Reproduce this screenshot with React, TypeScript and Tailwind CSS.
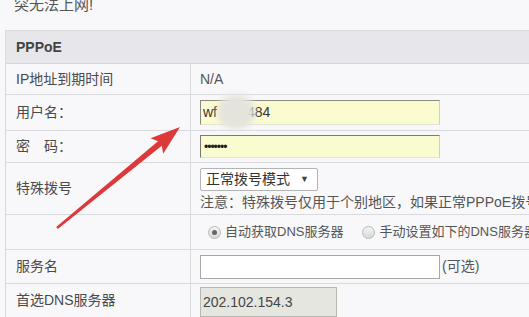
import React from "react";

const font = { fontFamily: '"Liberation Sans", "Noto Sans CJK SC", sans-serif' };

function Row({ label, h, children }: { label?: string; h: string; children?: React.ReactNode }) {
    return (
        <div className={`flex border-b border-[#d9d9de] ${h}`}>
            <div className="w-[185px] shrink-0 border-r border-[#d9d9de] pl-[10px] flex items-center text-[14px] text-[#4a4a4a]">
                {label}
            </div>
            <div className="flex-1 pl-[9px] flex flex-col justify-center">{children}</div>
        </div>
    );
}

function Radio({ checked }: { checked?: boolean }) {
    return (
        <span className="w-[13px] h-[13px] rounded-full border border-[#b8b8b8] bg-gradient-to-b from-[#f4f4f4] to-[#d8d8d8] flex items-center justify-center shrink-0">
            {checked && <span className="w-[5px] h-[5px] rounded-full bg-[#666]" />}
        </span>
    );
}

export default function App() {
    return (
        <div className="relative w-[529px] h-[317px] overflow-hidden bg-[#f8f8fa] text-[#444]" style={font}>
            <div className="h-[34px] pl-[14px]">
                <div className="-mt-[4px] text-[15px] leading-[18px] text-[#555]">突无法上网!</div>
            </div>

            <div className="ml-[5px] border-l border-t border-[#d9d9de] whitespace-nowrap">
                <div className="h-[33px] bg-[#e7e7eb] border-b border-[#d6d6db] pl-[10px] flex items-center text-[14px] font-bold text-[#444]">
                    PPPoE
                </div>

                <Row label="IP地址到期时间" h="h-[31px]">
                    <span className="text-[14px] text-[#555]">N/A</span>
                </Row>

                <Row label="用户名：" h="h-[36px]">
                    <div className="relative w-[240px] h-[25px] bg-[#fbfbd0] border border-t-[#8a8a80] border-l-[#8a8a80] border-r-[#cfcfc4] border-b-[#e4e4d4] flex items-center pl-[2px] text-[14px] text-[#333]">
                        <span>wf</span>
                        <span className="ml-[30px]">484</span>
                        <div className="absolute left-[16px] -top-[6px] w-[38px] h-[34px] rounded-full bg-[#e4e4dc] blur-[3px]" />
                    </div>
                </Row>

                <Row label="密　码：" h="h-[32px]">
                    <div className="w-[240px] h-[23px] bg-[#fbfbd0] border border-t-[#7a7a70] border-l-[#7a7a70] border-r-[#cfcfc4] border-b-[#e4e4d4] flex items-center pl-[3px] text-[12px] tracking-[-1px] text-[#222] leading-none">
                        •••••••
                    </div>
                </Row>

                <Row label="特殊拨号" h="h-[52px]">
                    <div className="w-[118px] h-[23px] mt-[1px] bg-white border border-[#b4b4b4] rounded-[2px] flex items-center pl-[5px] text-[14px] text-[#333]">
                        正常拨号模式
                        <span className="ml-[10px] text-[9px] text-[#444]">▼</span>
                    </div>
                    <div className="mt-[3px] text-[14px] leading-[16px] text-[#555]">
                        注意：特殊拨号仅用于个别地区，如果正常PPPoE拨号无法上网
                    </div>
                </Row>

                <Row h="h-[35px]">
                    <div className="flex items-center pl-[8px] text-[13px] text-[#555]">
                        <Radio checked />
                        <span className="ml-[4px]">自动获取DNS服务器</span>
                        <span className="ml-[19px]">
                            <Radio />
                        </span>
                        <span className="ml-[4px]">手动设置如下的DNS服务器</span>
                    </div>
                </Row>

                <Row label="服务名" h="h-[34px]">
                    <div className="flex items-center">
                        <div className="w-[240px] h-[24px] bg-white border border-[#a8a8a8]" />
                        <span className="ml-[2px] text-[14px] text-[#555]">(可选)</span>
                    </div>
                </Row>

                <Row label="首选DNS服务器" h="h-[34px]">
                    <div className="w-[137px] h-[30px] mt-[3px] bg-[#e6e6e1] border border-[#b8b8b2] flex items-center pl-[2px] text-[14px] text-[#444]">
                        202.102.154.3
                    </div>
                </Row>
            </div>

            <svg className="absolute inset-0 pointer-events-none" width="529" height="317" viewBox="0 0 529 317">
                <polygon
                    points="180,127 163.2,153.8 161.8,145.8 57.8,228.9 56.2,227.1 158,141.2 150.5,138.3"
                    fill="#dc3a3a"
                />
            </svg>
        </div>
    );
}
